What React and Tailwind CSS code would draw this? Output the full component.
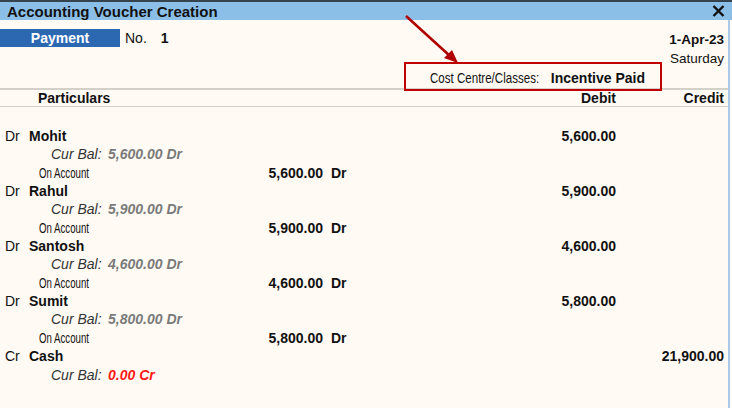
import React from "react";

const entries = [
  { type: "Dr", name: "Mohit", bal: "5,600.00 Dr", amount: "5,600.00" },
  { type: "Dr", name: "Rahul", bal: "5,900.00 Dr", amount: "5,900.00" },
  { type: "Dr", name: "Santosh", bal: "4,600.00 Dr", amount: "4,600.00" },
  { type: "Dr", name: "Sumit", bal: "5,800.00 Dr", amount: "5,800.00" },
];

const NameRow = ({ type, name, debit, credit }) => (
  <div className="flex flex-1 items-center pr-[4px]">
    <div className="w-[29px] pl-[5px]">{type}</div>
    <div className="flex-1 font-bold">{name}</div>
    <div className="w-[108px] text-right font-bold">{debit}</div>
    <div className="w-[108px] text-right font-bold">{credit}</div>
  </div>
);

const CurBal = ({ value, red }) => (
  <div className="flex flex-1 items-center pl-[51px] italic">
    <span className="w-[57px] text-[#333]">Cur Bal:</span>
    <span className={red ? "font-bold text-[#ff1a1a]" : "font-bold text-[#7a7a7a]"}>
      {value}
    </span>
  </div>
);

const App = () => {
  return (
    <div className="relative w-[732px] h-[408px] overflow-hidden bg-[#fffaf4] text-[14px] leading-[18px] text-[#111] font-['Liberation_Sans',Arial,sans-serif]">
      {/* title bar */}
      <div className="border-t-2 border-[#34434d]">
        <div className="flex h-[18px] items-center justify-between bg-[#8cbfe8] pl-[7px] pr-[7px]">
          <div className="text-[15px] font-bold leading-none">Accounting Voucher Creation</div>
          <svg width="13" height="12" viewBox="0 0 13 12">
            <path d="M1.5 1 L11.5 11 M11.5 1 L1.5 11" stroke="#111" strokeWidth="2.4" />
          </svg>
        </div>
      </div>

      <div className="w-[730px] h-[388px] border-r-2 border-[#a9cbea]">
        {/* voucher head */}
        <div className="h-[68px] flex flex-col">
          <div className="flex justify-between pt-[9px]">
            <div className="flex h-[18px] items-center">
              <div className="flex h-[18px] w-[120px] items-center justify-center bg-[#2b68b1] font-bold text-white">
                Payment
              </div>
              <span className="ml-[5px]">No.</span>
              <span className="ml-[14px] font-bold">1</span>
            </div>
            <div className="flex flex-col items-end pr-[4px] pt-[2px] text-[13.5px]">
              <div className="font-bold">1-Apr-23</div>
              <div className="mt-[1px]">Saturday</div>
            </div>
          </div>
          <div className="flex justify-end pr-[83px] pt-[1px]">
            <span className="w-[113px] whitespace-nowrap text-[15px]">
              <span className="inline-block origin-left scale-x-[0.77]">Cost Centre/Classes:</span>
            </span>
            <span className="ml-[8px] font-bold">Incentive Paid</span>
          </div>
        </div>

        {/* column header */}
        <div className="border-t-2 border-[#d3cfc9]"></div>
        <div className="flex h-[17px] items-center border-b border-[#d3cfc9] pr-[4px] font-bold">
          <div className="flex-1 pl-[38px]">Particulars</div>
          <div className="w-[108px] text-right">Debit</div>
          <div className="w-[108px] text-right">Credit</div>
        </div>

        {/* entries */}
        <div className="mt-[20px]">
          {entries.map((e) => (
            <div key={e.name} className="flex h-[55px] flex-col">
              <NameRow type={e.type} name={e.name} debit={e.amount} />
              <CurBal value={e.bal} />
              <div className="flex flex-1 items-center pl-[39px]">
                <span className="w-[200px] whitespace-nowrap text-[14px]">
                  <span className="inline-block origin-left scale-x-[0.69]">On Account</span>
                </span>
                <span className="w-[84px] text-right font-bold">{e.amount}</span>
                <span className="ml-[8px] font-bold">Dr</span>
              </div>
            </div>
          ))}
          <div className="flex h-[37px] flex-col">
            <NameRow type="Cr" name="Cash" credit="21,900.00" />
            <CurBal value="0.00 Cr" red />
          </div>
        </div>
      </div>

      {/* annotation */}
      <div className="absolute left-[404px] top-[62px] h-[29px] w-[258px] border-2 border-[#c00000]"></div>
      <svg className="absolute left-0 top-0" width="732" height="408">
        <line x1="406" y1="16" x2="450" y2="56" stroke="#b00000" strokeWidth="2.5" />
        <polygon points="458,63 444,58 452,50" fill="#b00000" />
      </svg>
    </div>
  );
};

export default App;
